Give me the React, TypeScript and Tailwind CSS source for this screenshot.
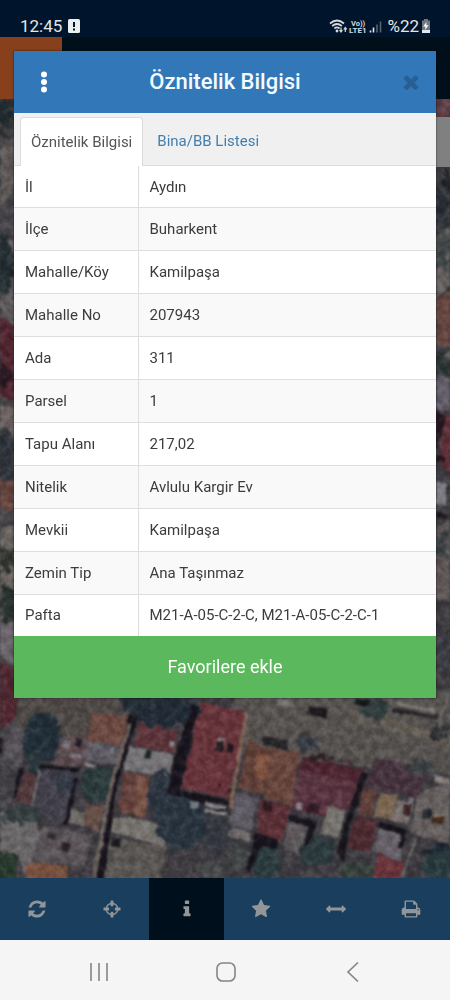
import React from "react";

const rows: [string, string][] = [
  ["İl", "Aydın"],
  ["İlçe", "Buharkent"],
  ["Mahalle/Köy", "Kamilpaşa"],
  ["Mahalle No", "207943"],
  ["Ada", "311"],
  ["Parsel", "1"],
  ["Tapu Alanı", "217,02"],
  ["Nitelik", "Avlulu Kargir Ev"],
  ["Mevkii", "Kamilpaşa"],
  ["Zemin Tip", "Ana Taşınmaz"],
  ["Pafta", "M21-A-05-C-2-C, M21-A-05-C-2-C-1"],
];

const glyphs = {
  refresh:
    "M1639 1056q0 5-1 7-64 268-268 434.5t-478 166.5q-146 0-282.5-55t-243.5-157l-129 129q-19 19-45 19t-45-19-19-45v-448q0-26 19-45t45-19h448q26 0 45 19t19 45-19 45l-137 137q71 66 161 102t187 36q134 0 250-65t186-179q11-17 53-117 8-23 30-23h192q13 0 22.5 9.5t9.5 22.5zm25-800v448q0 26-19 45t-45 19h-448q-26 0-45-19t-19-45 19-45l138-138q-148-137-349-137-134 0-250 65t-186 179q-11 17-53 117-8 23-30 23h-199q-13 0-22.5-9.5t-9.5-22.5v-7q65-268 270-434.5t480-166.5q146 0 284 55.5t245 156.5l130-129q19-19 45-19t45 19 19 45z",
  crosshairs:
    "M1325 1024h-109q-26 0-45-19t-19-45v-128q0-26 19-45t45-19h109q-32-108-112.5-188.5t-188.5-112.5v109q0 26-19 45t-45 19h-128q-26 0-45-19t-19-45v-109q-108 32-188.5 112.5t-112.5 188.5h109q26 0 45 19t19 45v128q0 26-19 45t-45 19h-109q32 108 112.5 188.5t188.5 112.5v-109q0-26 19-45t45-19h128q26 0 45 19t19 45v109q108-32 188.5-112.5t112.5-188.5zm339-192v128q0 26-19 45t-45 19h-143q-37 161-154.5 278.5t-278.5 154.5v143q0 26-19 45t-45 19h-128q-26 0-45-19t-19-45v-143q-161-37-278.5-154.5t-154.5-278.5h-143q-26 0-45-19t-19-45v-128q0-26 19-45t45-19h143q37-161 154.5-278.5t278.5-154.5v-143q0-26 19-45t45-19h128q26 0 45 19t19 45v143q161 37 278.5 154.5t154.5 278.5h143q26 0 45 19t19 45z",
  info: "M1216 1344v128q0 26-19 45t-45 19h-512q-26 0-45-19t-19-45v-128q0-26 19-45t45-19h64v-384h-64q-26 0-45-19t-19-45v-128q0-26 19-45t45-19h384q26 0 45 19t19 45v576h64q26 0 45 19t19 45zm-128-1152v192q0 26-19 45t-45 19h-256q-26 0-45-19t-19-45v-192q0-26 19-45t45-19h256q26 0 45 19t19 45z",
  star: "M1728 647q0 22-26 48l-363 354 86 500q1 7 1 20 0 21-10.5 35.5t-30.5 14.5q-19 0-40-12l-449-236-449 236q-22 12-40 12-21 0-31.5-14.5t-10.5-35.5q0-6 2-20l86-500-364-354q-25-27-25-48 0-37 56-46l502-73 225-455q19-41 49-41t49 41l225 455 502 73q56 9 56 46z",
  arrows:
    "M1792 896q0 26-19 45l-256 256q-19 19-45 19t-45-19-19-45v-128h-1024v128q0 26-19 45t-45 19-45-19l-256-256q-19-19-19-45t19-45l256-256q19-19 45-19t45 19 19 45v128h1024v-128q0-26 19-45t45-19 45 19l256 256q19 19 19 45z",
  print:
    "M448 1536h896v-256h-896v256zm0-640h896v-384h-160q-40 0-68-28t-28-68v-160h-640v640zm1152 64q0-26-19-45t-45-19-45 19-19 45 19 45 45 19 45-19 19-45zm128 0v416q0 13-9.5 22.5t-22.5 9.5h-224v160q0 40-28 68t-68 28h-960q-40 0-68-28t-28-68v-160h-224q-13 0-22.5-9.5t-9.5-22.5v-416q0-79 56.5-135.5t135.5-56.5h64v-544q0-40 28-68t68-28h672q40 0 88 20t76 48l152 152q28 28 48 76t20 88v256h64q79 0 135.5 56.5t56.5 135.5z",
  times:
    "M1490 1322q0 40-28 68l-136 136q-28 28-68 28t-68-28l-294-294-294 294q-28 28-68 28t-68-28l-136-136q-28-28-28-68t28-68l294-294-294-294q-28-28-28-68t28-68l136-136q28-28 68-28t68 28l294 294 294-294q28-28 68-28t68 28l136 136q28 28 28 68t-28 68l-294 294 294 294q28 28 28 68z",
};

function Glyph({ name, className }: { name: keyof typeof glyphs; className: string }) {
  return (
    <svg viewBox="0 0 1792 1792" className={className} fill="currentColor" aria-hidden="true">
      <path d={glyphs[name]} />
    </svg>
  );
}

const tools: { name: keyof typeof glyphs; label: string }[] = [
  { name: "refresh", label: "Yenile" },
  { name: "crosshairs", label: "Konum" },
  { name: "info", label: "Bilgi" },
  { name: "star", label: "Favoriler" },
  { name: "arrows", label: "Ölçüm" },
  { name: "print", label: "Yazdır" },
];

/* Roofs, roads and yards: fill colour and polygon points. */
const shapes: [string, string][] = [
  ["#48464a", "0,99 20,99 20,878 0,878"],
  ["#343538", "0,99 14,99 14,140 0,135"],
  ["#5d5856", "0,150 14,135 14,185 0,210"],
  ["#5f5b5d", "0,240 14,240 14,330 0,305"],
  ["#50252f", "0,318 14,325 14,402 0,395"],
  ["#6b6260", "0,405 14,408 14,440 0,435"],
  ["#66463f", "0,475 14,478 14,512 0,508"],
  ["#6a6560", "0,530 14,525 14,590 0,600"],
  ["#6b656b", "0,615 14,620 14,665 0,655"],
  ["#502831", "0,660 14,668 20,715 0,730"],
  ["#603f47", "436,99 450,99 450,117 436,117"],
  ["#33363c", "436,180 450,190 450,235 436,235"],
  ["#66605f", "436,235 450,228 450,285 436,300"],
  ["#64453f", "436,300 450,290 450,345 436,345"],
  ["#655e5c", "436,355 450,350 450,366 436,368"],
  ["#625d69", "436,375 450,375 450,412 436,408"],
  ["#2a1720", "436,410 446,418 438,448 436,448"],
  ["#643039", "446,415 450,415 450,475 439,460"],
  ["#7b7c81", "436,480 446,484 446,505 436,503"],
  ["#5e5555", "436,530 450,520 450,600 436,600"],
  ["#56524f", "236,690 460,690 460,775 420,772 225,752"],
  ["#4e4846", "20,690 132,690 128,740 60,745 12,728"],
  ["#5c4b4e", "58,738 92,736 86,765 54,766"],
  ["#6b4a42", "92,712 132,718 126,746 87,742"],
  ["#5c5860", "86,740 123,746 117,765 82,760"],
  ["#565156", "12,722 30,728 20,765 2,760"],
  ["#403e43", "0,765 26,768 14,800 0,798"],
  ["#51393b", "24,772 38,772 30,805 15,802"],
  ["#42404a", "42,766 78,770 66,826 32,812"],
  ["#6f6a66", "70,810 86,812 82,826 67,822"],
  ["#665048", "86,804 106,806 98,832 82,826"],
  ["#696668", "0,812 36,820 40,836 26,878 20,860 0,850"],
  ["#5a5458", "42,825 92,835 85,866 32,862"],
  ["#77503f", "28,862 68,866 66,882 25,882"],
  ["#5a5653", "108,838 166,846 160,882 100,882"],
  ["#5c343a", "140,722 178,732 174,752 134,746"],
  ["#777477", "128,746 174,754 169,777 124,770"],
  ["#65423d", "124,772 150,776 145,818 118,812"],
  ["#765146", "138,776 150,778 144,818 134,816"],
  ["#76726e", "112,818 136,818 165,826 165,846 110,832"],
  ["#67343b", "200,702 247,712 228,798 181,788"],
  ["#7c6052", "245,712 248,714 232,808 228,808"],
  ["#604038", "248,740 272,750 264,794 238,788"],
  ["#7c5140", "256,755 272,754 266,782 254,776"],
  ["#67463d", "272,748 300,752 293,806 264,798"],
  ["#583440", "302,757 365,771 353,806 325,818 292,808"],
  ["#4d2631", "304,757 365,770 361,784 300,770"],
  ["#5a2f36", "260,800 292,806 282,842 257,835"],
  ["#5e5a64", "236,792 258,798 251,830 228,824"],
  ["#6c6868", "228,826 251,832 249,842 226,836"],
  ["#77746f", "328,806 346,810 338,838 320,834"],
  ["#605a5d", "288,817 309,822 300,853 285,850"],
  ["#45333d", "376,758 426,768 420,797 364,786"],
  ["#60403a", "362,788 378,791 371,817 357,813"],
  ["#79644f", "380,792 398,795 392,820 374,816"],
  ["#77706c", "398,800 414,804 408,824 390,820"],
  ["#4c2a30", "356,816 378,820 370,852 346,848"],
  ["#666069", "380,828 406,834 400,862 372,850"],
  ["#655f5e", "418,795 450,780 450,844 410,833"],
  ["#69343a", "378,854 404,862 402,882 372,882"],
  ["#635c55", "352,710 450,735 450,745 350,720"],
];

/* Narrow shadows between the buildings. */
const shadows = [
  "129,715 138,718 134,730 118,782 103,882 95,882 112,790",
  "192,704 199,706 181,788 180,798 167,792 178,745",
  "362,772 368,774 350,825 344,862 336,852 350,808",
  "183,790 228,800 226,812 206,806 182,796",
  "40,765 80,768 79,772 40,768",
  "74,778 78,778 67,826 64,824",
  "289,814 318,822 308,846 303,850 309,827 289,822",
  "379,822 408,829 404,848 398,848 401,834 378,828",
  "255,832 278,840 276,850 262,846 250,872 246,870",
  "20,768 24,768 16,798 12,798",
];

/* Tree crowns: centre x, centre y, radius x, radius y, colour. */
const trees: [number, number, number, number, string][] = [
  [42, 737, 19, 25, "#222f38"], [35, 762, 9, 12, "#2a343b"], [98, 784, 18, 18, "#2b3a3b"],
  [66, 782, 12, 10, "#353b47"], [165, 710, 34, 16, "#222b36"], [140, 700, 22, 12, "#242e36"],
  [162, 795, 12, 26, "#2c3540"], [182, 822, 24, 28, "#29343f"], [216, 836, 13, 20, "#34373f"],
  [20, 815, 20, 8, "#363f3f"], [6, 866, 12, 17, "#28382c"], [307, 741, 11, 10, "#373b42"],
  [374, 710, 13, 12, "#333f3f"], [438, 732, 9, 10, "#303236"], [320, 758, 12, 4, "#2d2026"],
  [265, 860, 16, 20, "#2b3b3e"], [318, 850, 17, 16, "#2c3a3e"], [240, 856, 12, 15, "#3f4344"],
  [438, 864, 15, 18, "#283a3d"], [356, 872, 16, 9, "#36403c"], [422, 766, 14, 8, "#3d4344"],
  [345, 762, 7, 4, "#44323b"], [210, 870, 14, 8, "#494a4b"],
  [3, 112, 8, 12, "#202b30"], [5, 265, 9, 30, "#242d31"], [4, 375, 6, 12, "#2a1a25"],
  [5, 455, 9, 28, "#2d3338"], [7, 560, 8, 14, "#30332e"], [9, 605, 8, 20, "#29322f"],
  [443, 205, 6, 10, "#272d33"], [443, 252, 7, 20, "#3c4445"], [443, 365, 9, 12, "#2c3434"],
  [442, 545, 6, 14, "#363c40"], [443, 650, 7, 16, "#3a3a42"], [447, 180, 5, 12, "#202328"],
];

/* Cars, chimneys and sheds: x, y, width, height, colour. */
const details: [number, number, number, number, string][] = [
  [308, 705, 20, 10, "#1d1b1f"], [278, 699, 16, 6, "#777371"], [356, 698, 15, 7, "#171a1d"],
  [264, 736, 25, 10, "#29262a"], [216, 740, 8, 10, "#21191d"], [227, 743, 7, 9, "#21191d"],
  [217, 737, 9, 4, "#8a8285"], [146, 749, 6, 9, "#1d2523"], [112, 838, 9, 8, "#1e1b1f"],
  [63, 842, 8, 9, "#30222b"], [264, 800, 9, 10, "#2a151c"], [308, 803, 12, 9, "#321a24"],
  [297, 802, 7, 7, "#8a8088"], [191, 801, 8, 7, "#747b80"], [206, 802, 20, 4, "#838184"],
  [205, 809, 21, 3, "#8e8c8c"], [423, 809, 9, 9, "#1f252a"], [433, 814, 12, 9, "#422c20"],
  [433, 813, 12, 3, "#8a7a66"], [409, 797, 6, 8, "#837984"], [404, 804, 8, 10, "#3b2529"],
  [435, 776, 15, 5, "#8d8681"], [64, 740, 7, 8, "#77727b"], [76, 738, 6, 8, "#251e26"],
  [70, 753, 12, 4, "#7c7480"], [84, 762, 12, 4, "#858080"], [170, 740, 5, 5, "#81828b"],
  [110, 747, 4, 5, "#7c7c8c"], [0, 738, 4, 14, "#1b171c"], [422, 848, 12, 5, "#252832"],
  [436, 842, 14, 8, "#1c2432"], [393, 708, 46, 4, "#28262a"], [398, 702, 38, 4, "#79736f"],
  [437, 455, 10, 6, "#22121a"], [437, 512, 13, 5, "#1e1b20"], [48, 832, 9, 6, "#2e2b31"],
  [218, 784, 3, 3, "#2a1519"], [228, 788, 4, 4, "#2a1519"],
];

function AerialMap() {
  return (
    <svg
      viewBox="0 99 450 779"
      preserveAspectRatio="xMidYMin slice"
      className="absolute inset-0 h-full w-full"
      aria-hidden="true"
    >
      <defs>
        <filter id="rough" x="-5%" y="-5%" width="110%" height="110%" colorInterpolationFilters="sRGB">
          <feTurbulence type="fractalNoise" baseFrequency="0.13" numOctaves="3" seed="8" result="n" />
          <feDisplacementMap in="SourceGraphic" in2="n" scale="16" xChannelSelector="R" yChannelSelector="G" />
          <feGaussianBlur stdDeviation="1" />
        </filter>
        <filter id="soft" x="-5%" y="-5%" width="110%" height="110%" colorInterpolationFilters="sRGB">
          <feTurbulence type="fractalNoise" baseFrequency="0.09" numOctaves="2" seed="3" result="n" />
          <feDisplacementMap in="SourceGraphic" in2="n" scale="4" xChannelSelector="R" yChannelSelector="G" />
          <feGaussianBlur stdDeviation="0.8" />
        </filter>
        <filter id="grain" x="0" y="0" width="100%" height="100%" colorInterpolationFilters="sRGB">
          <feTurbulence type="fractalNoise" baseFrequency="0.14" numOctaves="3" seed="21" />
          <feColorMatrix values="2 0 0 0 -0.5  2 0 0 0 -0.5  2 0 0 0 -0.5  0 0 0 0 1" />
        </filter>
      </defs>
      <rect x="0" y="99" width="450" height="779" fill="#3e3c41" />
      <g filter="url(#soft)">
        {shapes.map(([fill, points]) => (
          <polygon key={points} points={points} fill={fill} />
        ))}
      </g>
      <g filter="url(#rough)">
        {trees.map(([cx, cy, rx, ry, fill]) => (
          <ellipse key={`${cx}-${cy}`} cx={cx} cy={cy} rx={rx} ry={ry} fill={fill} />
        ))}
      </g>
      <g filter="url(#soft)">
        {shadows.map((points) => (
          <polygon key={points} points={points} fill="#18141c" />
        ))}
        <path d="M130 724 112 782 94 878" stroke="#6b625d" strokeWidth="4" fill="none" />
        <path d="M447 698 438 728M416 838l-14 40M40 770 32 806" stroke="#746c6a" strokeWidth="2" fill="none" />
        {details.map(([x, y, w, h, fill]) => (
          <rect key={`${x}-${y}`} x={x} y={y} width={w} height={h} fill={fill} transform={`rotate(10 ${x} ${y})`} />
        ))}
      </g>
      <rect
        x="0"
        y="99"
        width="450"
        height="779"
        filter="url(#grain)"
        opacity="0.22"
        className="mix-blend-soft-light"
      />
    </svg>
  );
}

function StatusBar() {
  return (
    <header className="flex h-[37px] items-center justify-between bg-[#00152b] pl-5 pr-[19px] pt-3.5 text-[#e3e6ea]">
      <div className="flex items-center gap-1.5">
        <time className="text-[17px] leading-5">12:45</time>
        <svg viewBox="0 0 12 14" className="h-3.5 w-3" aria-hidden="true">
          <rect width="12" height="14" rx="1.5" fill="#eceef0" />
          <path d="M5 3h2v5H5zM5 9.5h2v2H5z" fill="#00152b" />
        </svg>
      </div>
      <div className="flex items-center">
        <svg viewBox="0 0 54 16" className="h-4 w-[54px]" fill="none" aria-hidden="true">
          <g stroke="#d5dade" strokeWidth="1.7">
            <path d="M1 5.500q7-6 14 0M3.200 8q4.800-4 9.600 0M5.400 10.500q2.600-2.200 5.200 0" />
          </g>
          <circle cx="8" cy="13" r="1.400" fill="#d5dade" />
          <path d="M12 9.500v4M10.500 12l1.500 2 1.500-2M16.300 14v-4M14.800 11.500l1.500-2 1.500 2" stroke="#d5dade" strokeWidth="1.200" />
          <text x="22" y="7.500" fontSize="7.500" fontWeight="700" fill="#d5dade" fontFamily="Roboto, sans-serif">Vo))</text>
          <text x="20" y="15" fontSize="8" fontWeight="700" fill="#d5dade" fontFamily="Roboto, sans-serif">LTE1</text>
          <path d="M41.500 12.500v2M44.500 9.500v5" stroke="#e3e6ea" strokeWidth="1.600" />
          <path d="M48 6.500v8M51.500 3.500v11" stroke="#59636e" strokeWidth="1.600" />
        </svg>
        <span className="ml-1 text-[17px] leading-5">%22</span>
        <svg viewBox="0 0 10 14" className="ml-0.5 h-3.5 w-2.5" aria-hidden="true">
          <path d="M3 0h4v1.500h2V14H1V1.500h2z" fill="#6f7880" />
          <path d="M1 11h8v3H1z" fill="#e3e6ea" />
          <path d="M5.500 3 2.200 7.600h2.300L4 11l3.600-4.800H5.300z" fill="#fff" />
        </svg>
      </div>
    </header>
  );
}

export default function App() {
  return (
    <div className="flex min-h-screen flex-col bg-[#f5f5f5] font-['Roboto',sans-serif]">
      <StatusBar />
      <main className="relative flex flex-1 flex-col">
        <div className="flex h-[62px] bg-[#000f1a]">
          <div className="w-[62px] bg-[#87401b]" />
        </div>
        <div className="relative flex-1 overflow-hidden">
          <AerialMap />
          <div className="absolute right-0 top-[18px] h-[50px] w-8 bg-[#808080]" />
        </div>

        <section
          role="dialog"
          aria-labelledby="dialog-title"
          className="absolute inset-x-3.5 top-3.5 bg-white text-[15px] leading-5 text-[#3c3c3c] shadow-[0_0_2px_rgba(0,0,0,0.6)]"
        >
          <div className="flex h-[62px] items-center justify-between bg-[#3278b8] px-1.5">
            <button type="button" aria-label="Menü" className="flex size-12 items-center justify-center text-white">
              <svg viewBox="0 0 6 22" className="h-[22px] w-1.5" fill="currentColor" aria-hidden="true">
                <circle cx="3" cy="3.500" r="3" />
                <circle cx="3" cy="11" r="3" />
                <circle cx="3" cy="18.500" r="3" />
              </svg>
            </button>
            <h1 id="dialog-title" className="text-[22px] font-medium leading-7 text-[#f4fbff]">
              Öznitelik Bilgisi
            </h1>
            <button type="button" aria-label="Kapat" className="flex size-12 items-center justify-end pr-2 text-[#285f92]">
              <Glyph name="times" className="size-[22px]" />
            </button>
          </div>

          <div role="tablist" className="flex h-[53px] items-end border-b border-[#dcdcdc] bg-[#f0f0f0] px-1.5">
            <button
              type="button"
              role="tab"
              aria-selected="true"
              className="-mb-px h-[49px] rounded-t-sm border border-b-0 border-[#dcdcdc] bg-white px-2.5 text-[#555]"
            >
              Öznitelik Bilgisi
            </button>
            <button type="button" role="tab" aria-selected="false" className="h-[49px] px-3.5 text-[#427fae]">
              Bina/BB Listesi
            </button>
          </div>

          <table className="h-[470px] w-full border-collapse text-left">
            <tbody>
              {rows.map(([label, value]) => (
                <tr key={label} className="border-b border-[#dedede] last:border-b-0 even:bg-[#f9f9f9]">
                  <th scope="row" className="w-[124px] border-r border-[#dedede] px-[11px] font-normal">
                    {label}
                  </th>
                  <td className="px-[11px]">{value}</td>
                </tr>
              ))}
            </tbody>
          </table>

          <button type="button" className="block h-[62px] w-full bg-[#5cb85c] text-lg text-white">
            Favorilere ekle
          </button>
        </section>
      </main>

      <nav aria-label="Harita araçları" className="grid h-[62px] grid-cols-6 bg-[#1a3e5e] pr-0.5">
        {tools.map((tool) => (
          <button
            key={tool.name}
            type="button"
            aria-label={tool.label}
            className={
              tool.name === "info"
                ? "flex items-center justify-center bg-[#000f1c] text-[#929698]"
                : "flex items-center justify-center text-[#929698]"
            }
          >
            <Glyph name={tool.name} className="size-5" />
          </button>
        ))}
      </nav>

      <footer className="flex h-[60px] items-center justify-around bg-[#f5f5f5] pl-9 pr-[34px] pt-1 text-[#858585]">
        <button type="button" aria-label="Son uygulamalar">
          <svg viewBox="0 0 20 20" className="size-5" stroke="currentColor" strokeWidth="1.600" aria-hidden="true">
            <path d="M2 1v18M10 1v18M18 1v18" />
          </svg>
        </button>
        <button type="button" aria-label="Ana ekran">
          <svg viewBox="0 0 20 20" className="size-5" fill="none" stroke="currentColor" strokeWidth="1.600" aria-hidden="true">
            <rect x="1" y="1" width="18" height="18" rx="5.500" />
          </svg>
        </button>
        <button type="button" aria-label="Geri">
          <svg viewBox="0 0 20 20" className="size-5" fill="none" stroke="currentColor" strokeWidth="1.600" aria-hidden="true">
            <path d="M15 .5 5 10l10 9.500" />
          </svg>
        </button>
      </footer>
    </div>
  );
}
